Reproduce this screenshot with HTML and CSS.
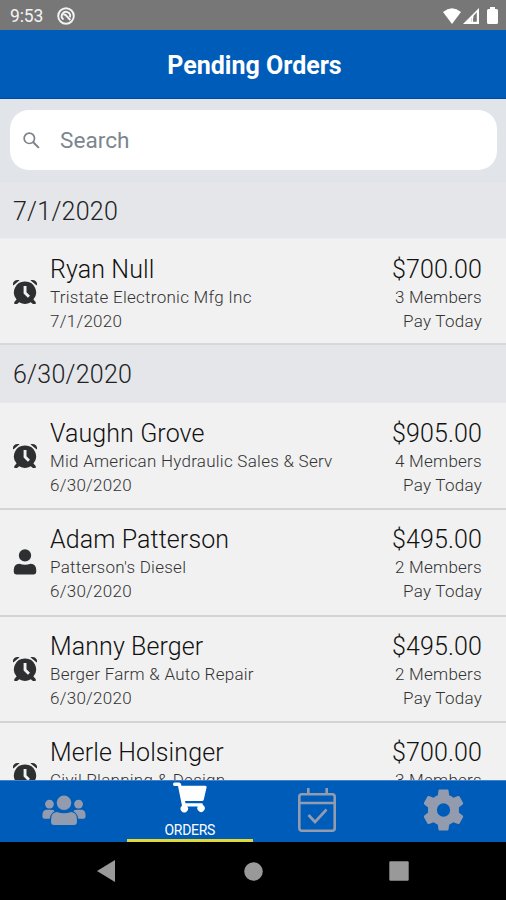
FILE: index.html
```html
<!DOCTYPE html>
<html lang="en">
<head>
<meta charset="utf-8">
<title>Pending Orders</title>
<link rel="stylesheet" href="styles.css">
</head>
<body>
<svg class="defs" width="0" height="0" aria-hidden="true">
  <symbol id="alarm" viewBox="0 0 26 26">
    <path d="M1.300 6.600C-.2 3.600 3 -.2 7.600 1.200ZM24.700 6.600C26.200 3.600 23 -.2 18.400 1.200Z"/>
    <path fill-rule="evenodd" d="M13 2.600a10.800 10.800 0 0 1 8.400 17.900l2.300 2.600v2h-2.800l-2.100-1.800a11 11 0 0 1-11.600 0l-2.100 1.800H2.300v-2l2.300-2.600A10.800 10.800 0 0 1 13 2.600ZM11.600 7v7.500l4.300 4.300 2.100-2.100-3.500-3.500V7Z"/>
  </symbol>
  <symbol id="person" viewBox="0 0 22 25">
    <circle cx="11" cy="6.200" r="5.900"/>
    <path d="M5.500 14.200Q11 16 16.500 14.200Q21.800 14.800 21.800 20V22.200Q21.800 24.500 19.500 24.500H2.500Q.2 24.500.2 22.200V20Q.2 14.800 5.500 14.200Z"/>
  </symbol>
</svg>
<div class="phone">
  <div class="status">
    <span class="time">9:53</span>
    <svg class="dnd" width="18" height="18" viewBox="0 0 18 18" fill="none" stroke="#f4f4f4">
      <circle cx="9" cy="9" r="7.800" stroke-width="1.900"/>
      <path d="M6.500 12.500A4.200 4.200 0 1 1 13 10.200" stroke-width="1.900"/>
      <path d="M6.300 7.500Q8.500 7 9.500 9L13.300 13" stroke-width="2"/>
    </svg>
    <div class="signals">
      <svg width="18" height="16" viewBox="0 0 18 16"><path fill="#fff" d="M0 4Q9-3.400 18 4L9 16Z"/></svg>
      <svg width="16" height="16" viewBox="0 0 16 16"><path fill="#fff" fill-rule="evenodd" d="M0 16 16 0V16ZM8.200 10.300V13.800H13.800V4.200L10.400 8V10.300Z"/><path fill="#fff" d="M8.400 8h1.600v6H8.400Z"/></svg>
      <svg class="battery" width="11" height="17" viewBox="0 0 11 17"><path fill="#fff" d="M3 0h5v2h1.500Q11 2 11 3.500v12Q11 17 9.500 17h-8Q0 17 0 15.500v-12Q0 2 1.500 2H3Z"/></svg>
    </div>
  </div>
  <header class="header"><h1>Pending Orders</h1></header>
  <div class="search-area">
    <div class="search">
      <svg width="17" height="17" viewBox="0 0 18 18" fill="none" stroke="#7c838b"><circle cx="6.700" cy="6.700" r="5.500" stroke-width="1.800"/><path d="m10.800 10.800 6 6" stroke-width="2.200"/></svg>
      <span>Search</span>
    </div>
  </div>
  <main class="list">
    <h2 class="first">7/1/2020</h2>
    <article class="row">
      <svg class="icon"><use href="#alarm"/></svg>
      <div class="info"><h3>Ryan Null</h3><p>Tristate Electronic Mfg Inc</p><p>7/1/2020</p></div>
      <div class="pay"><strong>$700.00</strong><p>3 Members</p><p>Pay Today</p></div>
    </article>
    <h2>6/30/2020</h2>
    <article class="row">
      <svg class="icon"><use href="#alarm"/></svg>
      <div class="info"><h3>Vaughn Grove</h3><p>Mid American Hydraulic Sales &amp; Serv</p><p>6/30/2020</p></div>
      <div class="pay"><strong>$905.00</strong><p>4 Members</p><p>Pay Today</p></div>
    </article>
    <article class="row">
      <svg class="icon"><use href="#person"/></svg>
      <div class="info"><h3>Adam Patterson</h3><p>Patterson's Diesel</p><p>6/30/2020</p></div>
      <div class="pay"><strong>$495.00</strong><p>2 Members</p><p>Pay Today</p></div>
    </article>
    <article class="row">
      <svg class="icon"><use href="#alarm"/></svg>
      <div class="info"><h3>Manny Berger</h3><p>Berger Farm &amp; Auto Repair</p><p>6/30/2020</p></div>
      <div class="pay"><strong>$495.00</strong><p>2 Members</p><p>Pay Today</p></div>
    </article>
    <article class="row">
      <svg class="icon"><use href="#alarm"/></svg>
      <div class="info"><h3>Merle Holsinger</h3><p>Civil Planning &amp; Design</p><p>6/30/2020</p></div>
      <div class="pay"><strong>$700.00</strong><p>3 Members</p><p>Pay Today</p></div>
    </article>
  </main>
  <nav class="tabs">
    <a class="tab">
      <svg width="44" height="31" viewBox="0 0 46 32" fill="#929cae">
        <circle cx="23" cy="8" r="7.600"/><circle cx="7.800" cy="9.300" r="4.600"/><circle cx="38.200" cy="9.300" r="4.600"/>
        <path d="M15.500 17.500Q23 20.500 30.500 17.500Q36.500 18 36.500 25V28Q36.500 31.200 33.500 31.200H12.500Q9.500 31.200 9.500 28V25Q9.500 18 15.500 17.500Z"/>
        <path d="M4.500 15.300H10Q12 15.300 13.200 16.800Q9 19 8 24.500H2.500Q.5 24.500.5 22.500V20.500Q.5 16 4.500 15.300ZM41.500 15.300H36Q34 15.300 32.800 16.800Q37 19 38 24.500H43.500Q45.500 24.500 45.500 22.500V20.500Q45.500 16 41.500 15.300Z"/>
      </svg>
    </a>
    <a class="tab active">
      <svg width="34" height="31" viewBox="0 0 34 31">
        <path fill="#fff" d="M1.500.5H6Q7.500.5 8 2L8.400 3.800H32Q34 3.800 33.500 5.700L30.800 17.500Q30.400 19 29 19H12L12.500 21.200H28.500Q30.200 21.200 29.800 23A3.700 3.700 0 1 1 24.800 24.500H14.300A3.700 3.700 0 1 1 9 23.800L5 4H1.500Q0 4 0 2.300Q0 .5 1.500.5Z"/>
      </svg>
      <span>ORDERS</span>
    </a>
    <a class="tab">
      <svg width="38" height="44" viewBox="0 0 38 44" fill="none" stroke="#929cae" stroke-width="2.600">
        <rect x="1.300" y="6.300" width="35.400" height="36.400" rx="2.500"/><path d="M1.300 15H36.700M10.300 0V6M28.700 0V6"/><path d="m10.500 27 6.500 7 11.500-12.500"/>
      </svg>
    </a>
    <a class="tab">
      <svg width="41" height="42" viewBox="0 0 42 42">
        <path fill="#929cae" fill-rule="evenodd" d="M17 0H25Q26 0 26.200 1.200L26.800 6Q29 7 31.200 8.500L35.800 6.700Q37 6.300 37.600 7.300L41 13.600Q41.500 14.600 40.600 15.400L36.700 18.400Q37.100 21 36.700 23.600L40.600 26.600Q41.500 27.400 41 28.400L37.600 34.700Q37 35.700 35.800 35.300L31.200 33.500Q29 35 26.800 36L26.200 40.800Q26 42 25 42H17Q16 42 15.800 40.800L15.200 36Q13 35 10.800 33.500L6.200 35.300Q5 35.700 4.400 34.700L1 28.400Q.5 27.400 1.400 26.600L5.300 23.600Q4.900 21 5.300 18.400L1.400 15.400Q.5 14.600 1 13.600L4.400 7.300Q5 6.300 6.200 6.700L10.800 8.500Q13 7 15.200 6L15.800 1.200Q16 0 17 0ZM21 14.200a6.800 6.800 0 1 0 0 13.600a6.800 6.800 0 1 0 0-13.600Z"/>
      </svg>
    </a>
  </nav>
  <div class="system">
    <svg width="18" height="22" viewBox="0 0 18 22"><path fill="#999" d="M18 0V22L0 11Z"/></svg>
    <svg class="home" width="19" height="19" viewBox="0 0 19 19"><circle cx="9.500" cy="9.500" r="9.300" fill="#999"/></svg>
    <svg width="20" height="20" viewBox="0 0 20 20"><rect x=".3" y=".3" width="19.400" height="19.400" rx="1.200" fill="#999"/></svg>
  </div>
</div>
</body>
</html>
```
FILE: styles.css
```css
* { box-sizing: border-box; }
body, h1, h2, h3, p { margin: 0; }
body { font-family: Roboto, sans-serif; color: #222; }
.defs { position: absolute; }
svg { display: block; flex: none; }
.phone { width: 506px; height: 900px; display: flex; flex-direction: column; overflow: hidden; background: #f1f1f1; }

.status { flex: none; height: 30px; background: #777; display: flex; align-items: center; padding: 1px 8px 0 10px; color: #f4f4f4; }
.time { font-size: 17.500px; width: 47px; letter-spacing: -.1px; }
.signals { margin-left: auto; display: flex; align-items: center; gap: 2px; }
.battery { margin-left: 6px; }

.header { flex: none; height: 69px; background: #005cb9; border-bottom: 1px solid #0048a5; display: flex; align-items: center; justify-content: center; padding: 3px 0 0 3px; }
h1 { color: #fff; font-size: 25px; font-weight: 700; line-height: 30px; }

.search-area { flex: none; height: 84px; padding: 11px 9px 0 10px; background: #e1e5ea; }
.search { height: 60px; border-radius: 19px; background: #fff; display: flex; align-items: center; padding: 1px 0 0 13px; gap: 20px; color: #7c868f; font-size: 22.600px; }

.list { flex: 1; min-height: 0; overflow: hidden; }
h2 { height: 58px; background: #e4e6ea; padding: 1px 13px 0; font-size: 25px; font-weight: 300; line-height: 57px; letter-spacing: .25px; border-top: 2px solid #d6d8dc; }
h2.first { height: 55px; line-height: 55px; border-top: 0; }
.row { height: 106.200px; display: flex; padding: 14px 24px 0 12px; border-top: 2px solid #d3d4d6; }
h2 + .row { border-top: 1px solid #e4e6ea; padding-top: 15px; }
h2.first + .row { height: 105.400px; border-top-color: #ebecee; }
h2:not(.first) { height: 58.800px; }
.icon { width: 26px; height: 26px; margin: 25px 12px 0 0; fill: #2e2f31; }
.info { flex: 1; white-space: nowrap; }
.pay { text-align: right; }
h3, .pay strong { display: block; font-size: 25px; font-weight: 300; line-height: 31px; letter-spacing: .1px; color: #111; }
p { font-size: 17px; line-height: 24px; font-weight: 300; letter-spacing: .26px; color: #333; }

.tabs { flex: none; height: 62px; background: #005cb9; border-top: 1px solid #447fcb; display: grid; grid-template-columns: repeat(4, 1fr); }
.tab { display: flex; flex-direction: column; align-items: center; justify-content: center; padding: 0 0 3px 2px; }
.tab.active { justify-content: flex-start; padding: 1px 0 0; border-bottom: 3px solid #e2d93d; color: #fff; }
.active span { font-size: 14px; line-height: 18px; margin-top: 8px; letter-spacing: -.3px; }
.system { flex: none; height: 58px; background: #000; display: flex; align-items: center; justify-content: space-between; padding: 0 97px; }
.home { margin-left: 2px; }
```
